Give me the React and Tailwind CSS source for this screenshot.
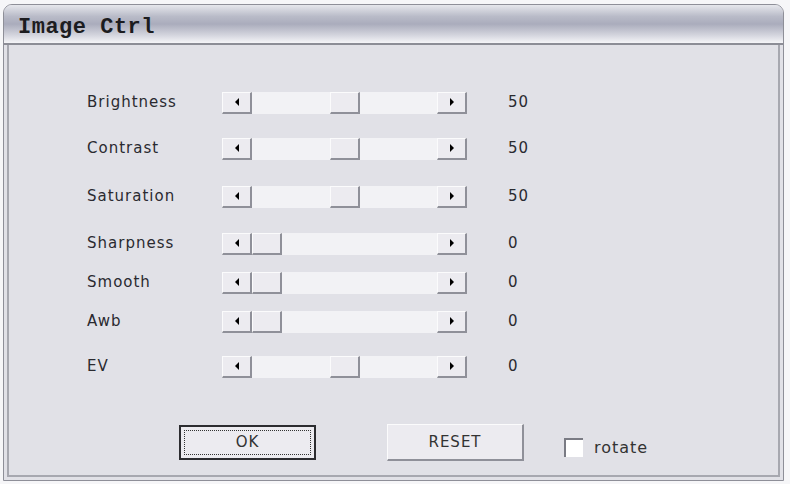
const rows = [
  { label: 'Brightness', value: '50', mid: true, mt: 'mt-[46px]' },
  { label: 'Contrast', value: '50', mid: true, mt: 'mt-[23px]' },
  { label: 'Saturation', value: '50', mid: true, mt: 'mt-[25px]' },
  { label: 'Sharpness', value: '0', mid: false, mt: 'mt-[24px]' },
  { label: 'Smooth', value: '0', mid: false, mt: 'mt-[16px]' },
  { label: 'Awb', value: '0', mid: false, mt: 'mt-[16px]' },
  { label: 'EV', value: '0', mid: true, mt: 'mt-[22px]' },
]

const face =
  'bg-[#ecebf0] border-t border-l border-[#fbfbfc] border-r-2 border-b-2 border-r-[#8f9099] border-b-[#8f9099]'

function Arrow({ dir }) {
  return (
    <div className={`w-[30px] h-full flex items-center justify-center ${face}`}>
      {dir === 'left' ? (
        <div className="w-0 h-0 border-y-[4px] border-y-transparent border-r-[4px] border-r-black" />
      ) : (
        <div className="w-0 h-0 border-y-[4px] border-y-transparent border-l-[4px] border-l-black" />
      )}
    </div>
  )
}

function Slider({ mid }) {
  return (
    <div className="w-[245px] h-[22px] flex">
      <Arrow dir="left" />
      <div className="flex-1 h-full bg-[#f2f2f5] flex">
        <div className={`w-[30px] h-full ${face} ${mid ? 'ml-[78px]' : 'ml-0'}`} />
      </div>
      <Arrow dir="right" />
    </div>
  )
}

export default function App() {
  const font = { fontFamily: '"DejaVu Sans", Verdana, sans-serif' }
  return (
    <div className="w-[790px] h-[484px] bg-[#f6f6f8] pt-[4px] pl-[3px]" style={font}>
      <div className="w-[781px] h-[477px] rounded-t-[9px] border border-[#8e8f98] bg-[#e1e1e7] flex flex-col overflow-hidden">
        {/* Title bar */}
        <div className="h-[40px] shrink-0 bg-[linear-gradient(to_bottom,#e6e7ec_0%,#b9bbc8_30%,#aaacbc_50%,#d2d3dc_78%,#f5f5f8_100%)] border-b-2 border-[#8c8d96] flex items-start pt-[12px] pl-[14px]">
          <span
            className="text-[22px] leading-[22px] font-bold text-[#1c1c20] tracking-[0.5px]"
            style={{ fontFamily: '"Liberation Mono", "Courier New", monospace' }}
          >
            Image Ctrl
          </span>
        </div>

        {/* Body */}
        <div className="flex-1 mx-[3px] mb-[3px] border-x-2 border-b-2 border-[#a7a8b0] flex flex-col pl-[78px] text-[15px] tracking-[1px] text-[#2a2a30]">
          {rows.map((r) => (
            <div key={r.label} className={`flex items-center h-[23px] ${r.mt}`}>
              <div className="w-[135px]">{r.label}</div>
              <Slider mid={r.mid} />
              <div className="ml-[41px]">{r.value}</div>
            </div>
          ))}

          {/* Buttons */}
          <div className="flex items-center mt-[46px]">
            <div className="ml-[92px] w-[137px] h-[35px] border-2 border-[#2c2c30] bg-[#ecebf0] p-[3px]">
              <div className="w-full h-full border border-dotted border-[#333] flex items-center justify-center text-[#333]">
                OK
              </div>
            </div>
            <div className={`ml-[71px] w-[137px] h-[37px] flex items-center justify-center text-[#333] ${face}`}>
              RESET
            </div>
            <div className="ml-[40px] w-[19px] h-[19px] bg-white border-t-2 border-l-2 border-[#7a7b84] mt-[10px]" />
            <div className="ml-[11px] mt-[10px] text-[16px] text-[#333]">rotate</div>
          </div>
        </div>
      </div>
    </div>
  )
}
